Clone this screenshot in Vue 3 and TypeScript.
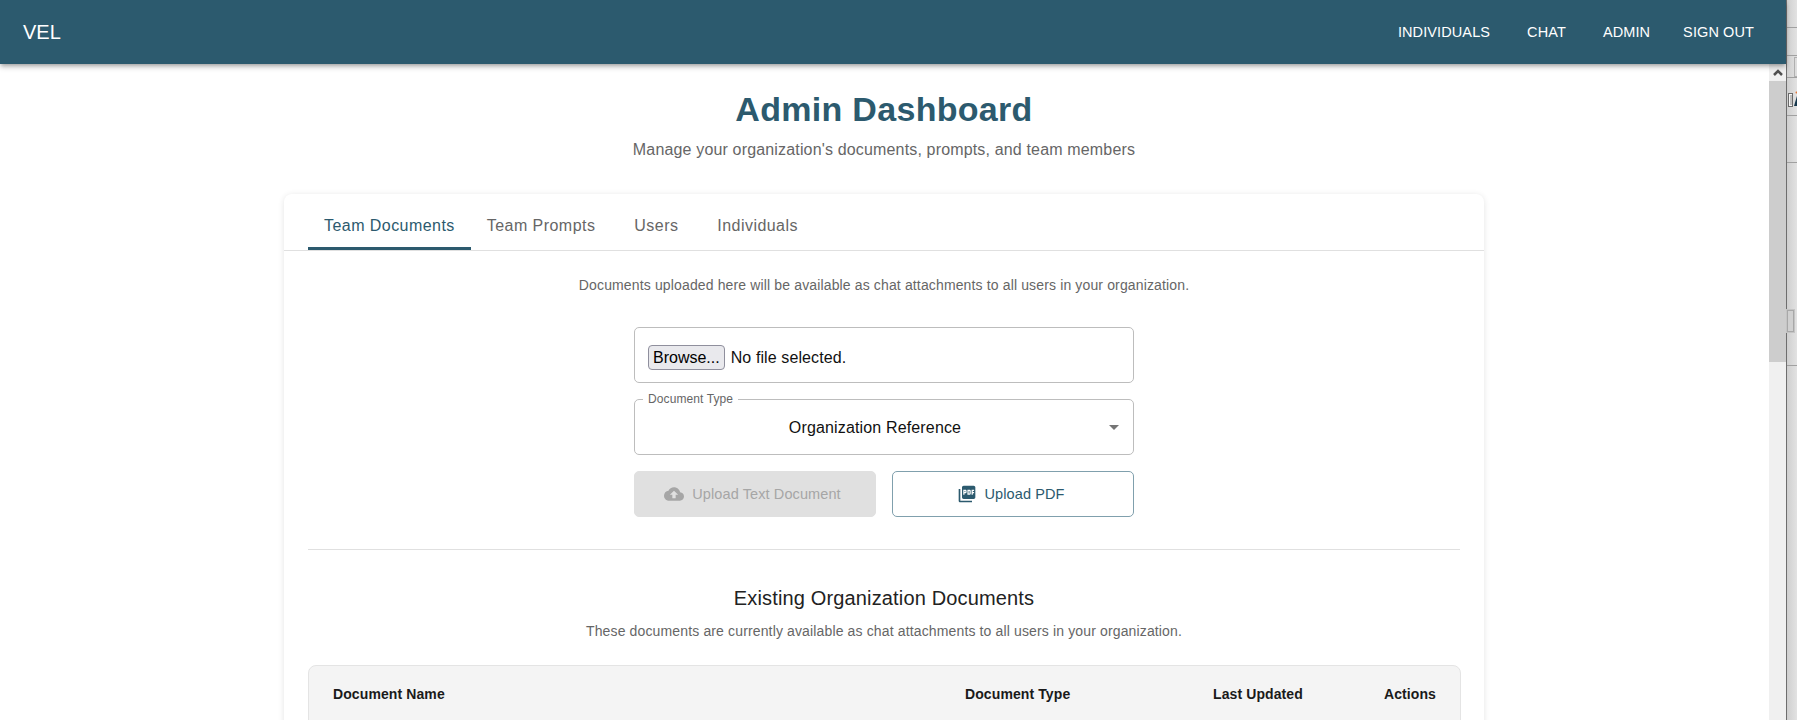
<template>
  <div class="desktop">
    <div class="browser">
      <header class="app-bar">
        <div class="brand">VEL</div>
        <nav class="nav">
          <a v-for="link in navLinks" :key="link" class="nav-link">{{ link }}</a>
        </nav>
      </header>

      <div class="viewport">
        <main class="page">
          <div class="page-head">
            <h1>Admin Dashboard</h1>
            <p>Manage your organization's documents, prompts, and team members</p>
          </div>

          <section class="card">
            <div class="tabs">
              <button
                v-for="(tab, index) in tabs"
                :key="tab"
                class="tab"
                :class="{ active: index === activeTab }"
                @click="activeTab = index"
              >
                {{ tab }}
              </button>
            </div>

            <div class="tab-body">
              <p class="hint hint-top">
                Documents uploaded here will be available as chat attachments to all users in your organization.
              </p>

              <div class="form">
                <div class="file-box">
                  <button class="browse">Browse...</button>
                  <span>No file selected.</span>
                </div>

                <div class="select-box">
                  <span class="select-label">Document Type</span>
                  <span class="select-value">Organization Reference</span>
                  <svg class="caret" viewBox="0 0 24 24"><path d="M7 10l5 5 5-5z" /></svg>
                </div>

                <div class="actions">
                  <button class="btn btn-disabled">
                    <svg viewBox="0 0 24 24">
                      <path d="M19.35 10.04C18.67 6.59 15.64 4 12 4 9.11 4 6.6 5.64 5.35 8.04 2.34 8.36 0 10.91 0 14c0 3.31 2.69 6 6 6h13c2.76 0 5-2.24 5-5 0-2.64-2.05-4.78-4.65-4.96zM14 13v4h-4v-4H7l5-5 5 5h-3z" />
                    </svg>
                    Upload Text Document
                  </button>
                  <button class="btn btn-outline">
                    <svg viewBox="0 0 24 24">
                      <path d="M20 2H8c-1.1 0-2 .9-2 2v12c0 1.1.9 2 2 2h12c1.1 0 2-.9 2-2V4c0-1.100-.9-2-2-2zm-8.500 7.500c0 .83-.67 1.500-1.500 1.500H9v2H7.500V7H10c.83 0 1.500.67 1.500 1.500v1zm5 2c0 .83-.67 1.500-1.500 1.500h-2.500V7H15c.83 0 1.500.67 1.500 1.500v3zm4-3H19v1h1.500V11H19v2h-1.500V7h3v1.500zM9 9.500h1v-1H9v1zM4 6H2v14c0 1.100.9 2 2 2h14v-2H4V6zm10 5.500h1v-3h-1v3z" />
                    </svg>
                    Upload PDF
                  </button>
                </div>
              </div>

              <hr class="divider" />

              <h2>Existing Organization Documents</h2>
              <p class="hint">These documents are currently available as chat attachments to all users in your organization.</p>

              <div class="doc-table">
                <div class="doc-head">
                  <span class="col-name">Document Name</span>
                  <span class="col-type">Document Type</span>
                  <span class="col-date">Last Updated</span>
                  <span class="col-actions">Actions</span>
                </div>
              </div>
            </div>
          </section>
        </main>

        <div class="scrollbar">
          <div class="scroll-up">
            <svg viewBox="0 0 12 12"><path d="M2 8l4-4 4 4" /></svg>
          </div>
          <div class="scroll-thumb"></div>
        </div>
      </div>
    </div>

    <!-- window behind the browser, only a sliver shows -->
    <aside class="behind">
      <i v-for="y in stripLines" :key="y" class="line" :style="{ top: y + 'px' }"></i>
      <span class="sliver-field"></span>
      <svg class="sliver-icon" viewBox="0 0 10 16">
        <rect x="0.5" y="2.5" width="4" height="13" fill="#f4f4f4" stroke="#6a6a6a" />
        <path d="M2 5h2M2 7h2M2 9h2M2 11h2M2 13h2" stroke="#8a8a8a" />
        <path d="M6 15l3-10h1v10z" fill="#17384d" />
        <circle cx="8.500" cy="1.500" r="1" fill="#e0763a" />
      </svg>
      <span class="sliver-tab"></span>
    </aside>
  </div>
</template>

<script setup lang="ts">
import { ref } from 'vue'

const navLinks: string[] = ['INDIVIDUALS', 'CHAT', 'ADMIN', 'SIGN OUT']
const tabs: string[] = ['Team Documents', 'Team Prompts', 'Users', 'Individuals']
const activeTab = ref(0)
const stripLines: number[] = [27, 55, 77, 115, 162, 365]
</script>

<style>
html,
body {
  margin: 0;
  overflow: hidden;
}
</style>

<style scoped>
.desktop {
  display: flex;
  width: 1797px;
  height: 720px;
  overflow: hidden;
  font-family: 'Liberation Sans', Arial, sans-serif;
  color: #111;
  background: #fff;
}

.browser {
  width: 1786px;
  height: 720px;
  display: flex;
  flex-direction: column;
}

.app-bar {
  position: relative;
  z-index: 2;
  height: 64px;
  flex: none;
  display: flex;
  align-items: center;
  justify-content: space-between;
  padding: 0 32px 0 23px;
  background: #2c5a6e;
  color: #fff;
  box-shadow: 0 2px 4px -1px rgba(0, 0, 0, 0.3), 0 4px 5px rgba(0, 0, 0, 0.14);
}

.brand {
  font-size: 20px;
}

.nav {
  display: flex;
  gap: 37px;
}

.nav-link {
  font-size: 14.5px;
  line-height: 20px;
  letter-spacing: 0.1px;
}

.nav-link:last-child {
  margin-left: -4px;
}

.viewport {
  flex: 1;
  min-height: 0;
  display: flex;
}

.page {
  flex: 1;
  min-width: 0;
  overflow: hidden;
  padding-right: 1px;
}

.page-head {
  text-align: center;
  padding-top: 24px;
}

h1 {
  margin: 0;
  font-size: 34px;
  line-height: 42px;
  font-weight: 700;
  letter-spacing: 0.3px;
  color: #2c5a6e;
}

.page-head p {
  margin: 8px 0 0;
  font-size: 16px;
  line-height: 24px;
  letter-spacing: 0.16px;
  color: #666;
}

.card {
  width: 1200px;
  margin: 32px auto 0;
  background: #fff;
  border-radius: 8px;
  box-shadow: 0 1px 6px rgba(0, 0, 0, 0.11);
}

.tabs {
  display: flex;
  height: 56px;
  padding: 0 24px;
  border-bottom: 1px solid #e0e0e0;
  box-sizing: content-box;
}

.tab {
  height: 56px;
  min-width: 90px;
  padding: 8px 16px 0;
  border: 0;
  background: none;
  font: inherit;
  font-size: 16px;
  letter-spacing: 0.45px;
  color: #666;
  cursor: pointer;
}

.tab.active {
  color: #2c5a6e;
  box-shadow: inset 0 -3px 0 #2c5a6e;
}

.tab-body {
  padding: 24px;
}

.hint {
  margin: 0;
  text-align: center;
  font-size: 14px;
  line-height: 20px;
  letter-spacing: 0.14px;
  color: #666;
}

.form {
  width: 500px;
  margin: 24px auto 0;
  padding-top: 8px;
  display: flex;
  flex-direction: column;
  gap: 16px;
}

.file-box,
.select-box {
  position: relative;
  height: 56px;
  box-sizing: border-box;
  display: flex;
  align-items: center;
  border: 1px solid #bdbdbd;
  border-radius: 5px;
  font-size: 16px;
}

.file-box {
  padding: 5px 13px 0;
  gap: 6px;
  letter-spacing: 0.1px;
}

.browse {
  height: 25px;
  padding: 0 4px;
  border: 1px solid #8f8f9d;
  border-radius: 4px;
  background: #e9e9ed;
  font: inherit;
  color: #000;
}

.select-label {
  position: absolute;
  left: 8px;
  top: -8px;
  padding: 0 5px;
  background: #fff;
  font-size: 12px;
  line-height: 14px;
  letter-spacing: 0.1px;
  color: #666;
}

.select-value {
  flex: 1;
  text-align: center;
  padding: 2px 18px 0 0;
  letter-spacing: 0.15px;
}

.caret {
  position: absolute;
  right: 7px;
  width: 24px;
  height: 24px;
  fill: #757575;
}

.actions {
  display: flex;
  gap: 16px;
}

.btn {
  flex: 1;
  height: 46px;
  padding: 0 5px 0 0;
  display: flex;
  align-items: center;
  justify-content: center;
  gap: 8px;
  border-radius: 5px;
  font: inherit;
  font-size: 14.5px;
  letter-spacing: 0.1px;
}

.btn svg {
  width: 20px;
  height: 20px;
  fill: currentColor;
}

.btn-disabled {
  border: 1px solid #e0e0e0;
  background: #e0e0e0;
  color: #a6a6a6;
}

.btn-outline {
  border: 1px solid #80a0ad;
  background: #fff;
  color: #2c5a6e;
}

.divider {
  margin: 32px 0 0;
  border: 0;
  border-top: 1px solid #e0e0e0;
}

h2 {
  margin: 34px 0 0;
  text-align: center;
  font-size: 20px;
  line-height: 28px;
  font-weight: 400;
  letter-spacing: 0.15px;
  color: #222;
}

h2 + .hint {
  margin-top: 9px;
}

.doc-table {
  margin: 24px -1px 0 0;
}

.doc-head {
  display: flex;
  align-items: center;
  height: 56px;
  padding: 0 24px;
  background: #f4f4f4;
  border: 1px solid #e4e4e4;
  border-radius: 8px 8px 0 0;
  font-size: 14px;
  font-weight: 700;
  letter-spacing: 0.1px;
  color: #1a1a1a;
}

.col-name {
  flex: 1;
}

.col-type {
  width: 248px;
}

.col-date {
  width: 170px;
}

.col-actions {
  width: 53px;
  text-align: right;
}

.scrollbar {
  width: 17px;
  flex: none;
  background: #f0f0f0;
}

.scroll-up {
  height: 17px;
  display: flex;
  align-items: center;
  justify-content: center;
}

.scroll-up svg {
  width: 12px;
  height: 12px;
  fill: none;
  stroke: #505050;
  stroke-width: 2.5;
}

.scroll-thumb {
  height: 281px;
  background: #cdcdcd;
}

.behind {
  position: relative;
  width: 11px;
  flex: none;
  background: linear-gradient(to right, #cfcfcf, #e2e2e2);
  border-left: 1px solid #6e6e6e;
  box-sizing: border-box;
}

.line {
  position: absolute;
  left: 0;
  right: 0;
  height: 1px;
  background: #a0a0a0;
}

.sliver-field {
  position: absolute;
  left: 7px;
  top: 57px;
  width: 10px;
  height: 18px;
  background: #dedede;
  border: 1px solid #b0b0b0;
}

.sliver-icon {
  position: absolute;
  left: 1px;
  top: 91px;
  width: 10px;
  height: 16px;
}

.sliver-tab {
  position: absolute;
  left: 0;
  top: 310px;
  width: 5px;
  height: 20px;
  border: 1px solid #a8a8a8;
  outline: 1px solid #c4c4c4;
  background: #d0d0d0;
}
</style>
